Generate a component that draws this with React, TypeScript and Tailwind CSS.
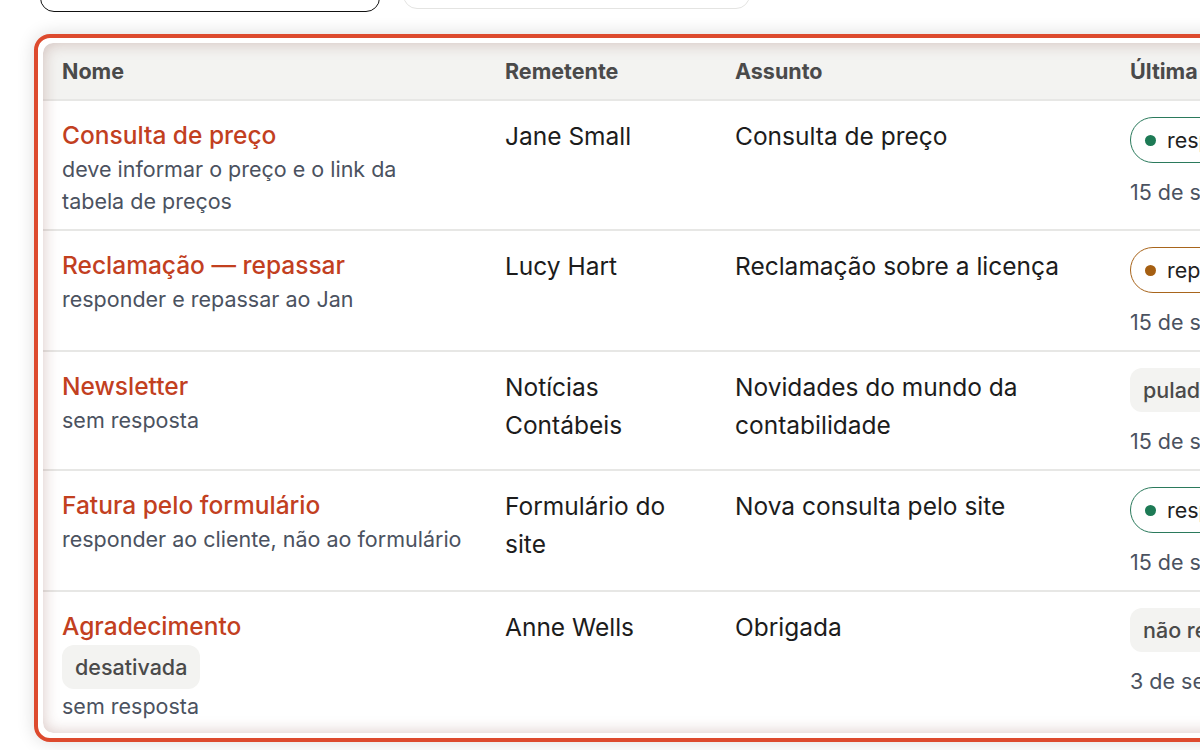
import type { ReactNode } from 'react';

type Status =
  | { kind: 'dot'; tone: 'green' | 'amber'; label: string }
  | { kind: 'flat'; label: string };

type Rule = {
  name: string;
  note: string;
  disabled?: boolean;
  sender: string;
  subject: string;
  status: Status;
  date: string;
};

const rules: Rule[] = [
  {
    name: 'Consulta de preço',
    note: 'deve informar o preço e o link da tabela de preços',
    sender: 'Jane Small',
    subject: 'Consulta de preço',
    status: { kind: 'dot', tone: 'green', label: 'respondida' },
    date: '15 de set. de 2025',
  },
  {
    name: 'Reclamação — repassar',
    note: 'responder e repassar ao Jan',
    sender: 'Lucy Hart',
    subject: 'Reclamação sobre a licença',
    status: { kind: 'dot', tone: 'amber', label: 'repassada' },
    date: '15 de set. de 2025',
  },
  {
    name: 'Newsletter',
    note: 'sem resposta',
    sender: 'Notícias Contábeis',
    subject: 'Novidades do mundo da contabilidade',
    status: { kind: 'flat', label: 'pulada' },
    date: '15 de set. de 2025',
  },
  {
    name: 'Fatura pelo formulário',
    note: 'responder ao cliente, não ao formulário',
    sender: 'Formulário do site',
    subject: 'Nova consulta pelo site',
    status: { kind: 'dot', tone: 'green', label: 'respondida' },
    date: '15 de set. de 2025',
  },
  {
    name: 'Agradecimento',
    note: 'sem resposta',
    disabled: true,
    sender: 'Anne Wells',
    subject: 'Obrigada',
    status: { kind: 'flat', label: 'não respondida' },
    date: '3 de set. de 2025',
  },
];

function FlatTag({ children }: { children: ReactNode }) {
  return (
    <span className="inline-flex h-[44px] items-center whitespace-nowrap rounded-[12px] bg-[#f3f3f1] px-[13px] text-[21.5px] font-medium text-[#4a4a4a]">
      {children}
    </span>
  );
}

function StatusBadge({ status }: { status: Status }) {
  if (status.kind === 'flat') return <FlatTag>{status.label}</FlatTag>;
  const green = status.tone === 'green';
  return (
    <span
      className={
        'inline-flex h-[46px] items-center gap-[11px] whitespace-nowrap rounded-full border-[1.5px] bg-white pl-[14px] pr-[16px] text-[21.5px] text-[#1f1f1f] ' +
        (green ? 'border-[#2b7a5c]' : 'border-[#a8651c]')
      }
    >
      <span className={'h-[11px] w-[11px] rounded-full ' + (green ? 'bg-[#1d7a55]' : 'bg-[#a55f12]')} />
      {status.label}
    </span>
  );
}

export default function App() {
  return (
    <div
      className="h-[750px] w-[1200px] overflow-hidden bg-white"
      style={{ fontFamily: 'Inter, "Noto Sans", sans-serif' }}
    >
      <div className="pl-[34px]">
        {/* filtros */}
        <div className="flex items-start gap-[23px] pl-[6px]">
          <div className="-mt-[36px] h-[48px] w-[340px] rounded-[14px] border-[1.5px] border-[#111]" />
          <div className="-mt-[36px] h-[45px] w-[347px] rounded-[14px] border-[1.5px] border-[#e4e4e2]" />
        </div>

        {/* tabela */}
        <div className="mt-[22px] w-[1240px] rounded-[16px] border-4 border-[#dd4a2e] bg-white p-[5px] shadow-[0_0_18px_rgba(0,0,0,0.14)]">
          <div className="relative h-[690px] overflow-hidden rounded-[10px]">
            <table className="w-[1400px] table-fixed border-collapse text-left">
              <colgroup>
                <col className="w-[443px]" />
                <col className="w-[230px]" />
                <col className="w-[395px]" />
                <col className="w-[332px]" />
              </colgroup>
              <thead>
                <tr className="h-[57px] border-b-2 border-[#e7e7e5] bg-[#f3f3f1] text-[21.5px] text-[#4a4a4a]">
                  <th className="pl-[19px] font-bold">Nome</th>
                  <th className="pl-[19px] font-bold">Remetente</th>
                  <th className="pl-[19px] font-bold">Assunto</th>
                  <th className="pl-[19px] font-bold">Última execução</th>
                </tr>
              </thead>
              <tbody>
                {rules.map((r) => (
                  <tr key={r.name} className="border-b-2 border-[#e7e7e5] align-top">
                    <td className="pl-[19px] pr-[23px] pt-[16px] pb-[12px]">
                      <div className="text-[24.5px] font-medium leading-[36px] text-[#c2401f]">{r.name}</div>
                      {r.disabled && (
                        <div className="my-[1px]">
                          <FlatTag>desativada</FlatTag>
                        </div>
                      )}
                      <div className="text-[21.5px] leading-[32px] text-[#4b5260]">{r.note}</div>
                    </td>
                    <td className="pl-[19px] pr-[16px] pt-[16px] text-[24.5px] leading-[38px] text-[#1c1c1c]">
                      {r.sender}
                    </td>
                    <td className="pl-[19px] pr-[16px] pt-[16px] text-[24.5px] leading-[38px] text-[#1c1c1c]">
                      {r.subject}
                    </td>
                    <td className="pl-[19px] pt-[16px] pb-[12px]">
                      <StatusBadge status={r.status} />
                      <div className="mt-[13px] whitespace-nowrap text-[21.5px] leading-[32px] text-[#4b5260]">
                        {r.date}
                      </div>
                    </td>
                  </tr>
                ))}
              </tbody>
            </table>
            <div className="pointer-events-none absolute inset-0 rounded-[10px] shadow-[inset_0_0_16px_rgba(120,50,40,0.28)]" />
          </div>
        </div>
      </div>
    </div>
  );
}
